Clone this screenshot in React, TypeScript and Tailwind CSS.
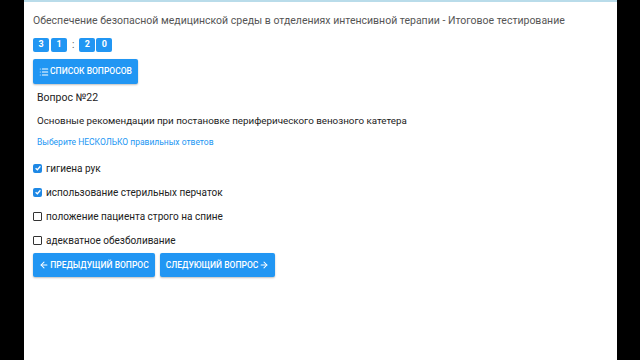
import { ArrowLeft, ArrowRight, List } from "lucide-react";

const answers = [
  { text: "гигиена рук", checked: true },
  { text: "использование стерильных перчаток", checked: true },
  { text: "положение пациента строго на спине", checked: false },
  { text: "адекватное обезболивание", checked: false },
];

function Digit({ d }: { d: string }) {
  return (
    <span className="flex h-[14px] w-[16px] items-center justify-center rounded-[2px] bg-[#2196f3] text-[9px] font-bold text-white">
      {d}
    </span>
  );
}

function CheckBox({ checked }: { checked: boolean }) {
  if (checked) {
    return (
      <span className="flex h-[9px] w-[9px] items-center justify-center rounded-[2px] bg-[#1e88e5]">
        <svg viewBox="0 0 10 10" className="h-[8px] w-[8px]" fill="none">
          <path d="M2 5.2 L4.2 7.2 L8 2.8" stroke="white" strokeWidth="1.6" />
        </svg>
      </span>
    );
  }
  return <span className="h-[9px] w-[9px] rounded-[1px] border border-[#333]" />;
}

export default function App() {
  return (
    <div
      className="flex h-[360px] w-[640px] bg-black"
      style={{ fontFamily: "Roboto, 'Liberation Sans', sans-serif" }}
    >
      <div className="w-[24px]" />
      <div className="flex flex-1 flex-col border-t-[2px] border-[#b9dcea] bg-white pl-[9px] text-[#444]">
        <div className="mt-[12px] text-[10.5px] leading-[14px] text-[#555]">
          Обеспечение безопасной медицинской среды в отделениях интенсивной терапии - Итоговое тестирование
        </div>

        <div className="mt-[10px] flex items-center">
          <div className="flex gap-[2px]">
            <Digit d="3" />
            <Digit d="1" />
          </div>
          <span className="mx-[5px] text-[10px] leading-[14px] text-[#555]">:</span>
          <div className="flex gap-[1px]">
            <Digit d="2" />
            <Digit d="0" />
          </div>
        </div>

        <button
          type="button"
          className="mt-[7px] flex h-[25px] w-[105px] items-center justify-center gap-[1px] rounded-[2px] bg-[#2196f3] text-[8.5px] font-medium text-white shadow-[0_1px_2px_rgba(0,0,0,0.25)]"
        >
          <List className="h-[10px] w-[10px]" strokeWidth={2.5} />
          СПИСОК ВОПРОСОВ
        </button>

        <div className="mt-[6px] pl-[4px] text-[10.5px] leading-[16px] text-[#222]">Вопрос №22</div>

        <div className="mt-[8px] pl-[4px] text-[9.8px] leading-[14px] text-[#222]">
          Основные рекомендации при постановке периферического венозного катетера
        </div>

        <div className="mt-[8px] pl-[4px] text-[8.5px] leading-[12px] text-[#2196f3]">
          Выберите НЕСКОЛЬКО правильных ответов
        </div>

        <div className="mt-[13px] flex flex-col gap-[10.3px]">
          {answers.map((a) => (
            <label key={a.text} className="flex h-[14px] items-center gap-[4px] text-[10px] text-[#222]">
              <CheckBox checked={a.checked} />
              {a.text}
            </label>
          ))}
        </div>

        <div className="mt-[5px] flex gap-[5px]">
          <button
            type="button"
            className="flex h-[24px] w-[122px] items-center justify-center gap-[1px] rounded-[2px] bg-[#2196f3] text-[8.5px] font-medium text-white shadow-[0_1px_2px_rgba(0,0,0,0.25)]"
          >
            <ArrowLeft className="h-[10px] w-[10px]" strokeWidth={2.5} />
            ПРЕДЫДУЩИЙ ВОПРОС
          </button>
          <button
            type="button"
            className="flex h-[24px] w-[115px] items-center justify-center gap-[1px] rounded-[2px] bg-[#2196f3] text-[8.5px] font-medium text-white shadow-[0_1px_2px_rgba(0,0,0,0.25)]"
          >
            СЛЕДУЮЩИЙ ВОПРОС
            <ArrowRight className="h-[10px] w-[10px]" strokeWidth={2.5} />
          </button>
        </div>
      </div>
      <div className="w-[23px]" />
    </div>
  );
}
